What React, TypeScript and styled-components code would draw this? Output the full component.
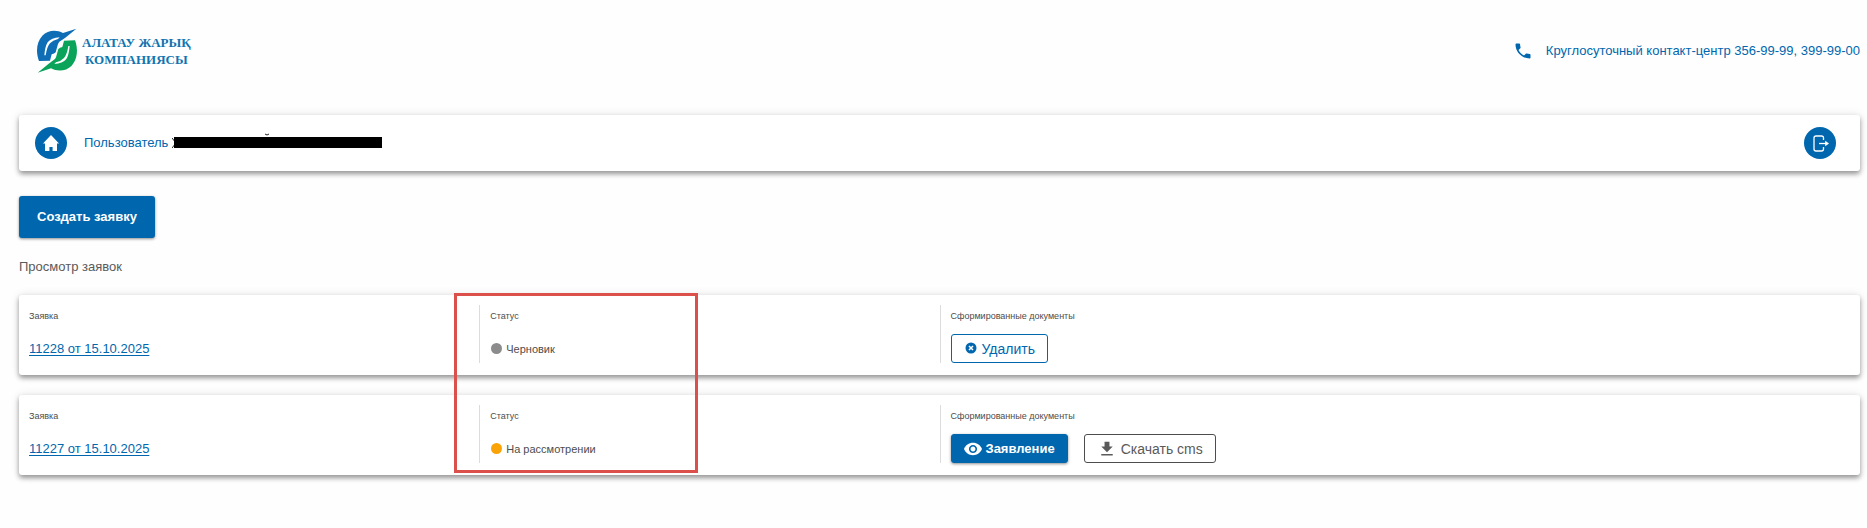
import React from "react";
import styled, { createGlobalStyle, css } from "styled-components";

const blue = "#0067ae";
const grey = "#4d4d4d";
const cardShadow = "0 3px 5px rgba(0, 0, 0, 0.38), 0 0 10px rgba(0, 0, 0, 0.1)";

const GlobalStyle = createGlobalStyle`
  * { box-sizing: border-box; }
  body {
    margin: 0;
    background: #fefefe;
    color: ${grey};
    font: 13px/20px "Liberation Sans", Arial, sans-serif;
  }
`;

const Page = styled.div`
  padding: 0 7px 52px 19px;
`;

const Header = styled.header`
  display: flex;
  align-items: center;
  justify-content: space-between;
  height: 101px;
  margin-bottom: 14px;
  padding-left: 17px;
`;

const Logo = styled.a`
  display: flex;
  align-items: center;
  gap: 3px;
  color: #1174b0;
  text-decoration: none;
`;

const LogoName = styled.span`
  font: bold 13px/17px "Liberation Serif", "Times New Roman", serif;
  text-align: center;
`;

const Contact = styled.div`
  display: flex;
  align-items: center;
  gap: 13px;
  color: ${blue};
`;

const Card = styled.section`
  background: #fff;
  border-radius: 3px;
  box-shadow: ${cardShadow};
`;

const UserBar = styled(Card)`
  display: flex;
  align-items: center;
  height: 56px;
  padding: 0 24px 0 16px;
`;

const RoundButton = styled.button`
  display: flex;
  align-items: center;
  justify-content: center;
  width: 32px;
  height: 32px;
  padding: 0;
  border: 0;
  border-radius: 50%;
  background: ${blue};
  color: #fff;
`;

const User = styled.div`
  display: flex;
  flex: 1;
  align-items: center;
  gap: 4px;
  margin-left: 17px;
  color: ${blue};
`;

const CreateButton = styled.button`
  display: block;
  height: 42px;
  margin-top: 25px;
  padding: 0 18px;
  border: 0;
  border-radius: 3px;
  background: ${blue};
  box-shadow: 0 1px 3px rgba(0, 0, 0, 0.45);
  color: #fff;
  font: bold 13px/20px "Liberation Sans", Arial, sans-serif;
`;

const Title = styled.h1`
  margin: 19px 0 18px;
  color: #5a5a5a;
  font-size: 13px;
  font-weight: normal;
  line-height: 20px;
`;

const List = styled.main`
  position: relative;
  display: grid;
  gap: 20px;
`;

const Request = styled(Card)`
  display: grid;
  grid-template-columns: 1fr 1fr 2fr;
  height: 80px;
  padding: 10px 0 12px;
`;

const Cell = styled.div<{ $divided?: boolean }>`
  display: flex;
  flex-direction: column;
  justify-content: space-between;
  padding: 5px 10px 0;
  border-left: ${(p) => (p.$divided ? "1px solid #dcdcdc" : "0")};
`;

const Label = styled.span`
  font-size: 9px;
  line-height: 12px;
`;

const Value = styled.div`
  display: flex;
  align-items: center;
  gap: 16px;
  height: 29px;
`;

const RequestLink = styled.a`
  color: ${blue};
  text-underline-offset: 2px;
`;

const Status = styled.span`
  display: flex;
  align-items: center;
  gap: 4px;
  padding-left: 1px;
  font-size: 11px;
`;

const Dot = styled.i<{ $color: string }>`
  width: 11px;
  height: 11px;
  border-radius: 50%;
  background: ${(p) => p.$color};
`;

const DocButton = styled.button<{ $kind: "blue" | "grey" | "filled" }>`
  display: flex;
  align-items: center;
  gap: 4px;
  height: 29px;
  padding: 0 12px;
  border: 1px solid ${(p) => (p.$kind === "grey" ? grey : blue)};
  border-radius: 3px;
  background: #fff;
  color: ${(p) => (p.$kind === "grey" ? "#5a5a5a" : blue)};
  font: 14px/20px "Liberation Sans", Arial, sans-serif;
  ${(p) =>
    p.$kind === "filled" &&
    css`
      background: ${blue};
      box-shadow: 0 1px 3px rgba(0, 0, 0, 0.45);
      color: #fff;
      font-size: 13px;
      font-weight: bold;
    `}
`;

const Highlight = styled.div`
  position: absolute;
  top: -2px;
  bottom: 2px;
  left: calc(25% - 25px);
  width: 244px;
  border: 3px solid #dc504c;
  pointer-events: none;
`;

const hook =
  "M27 123C17 97 19 66 37 47C53 31 78 28 99 39L139 26L106 53L96 60Q86 65 84 72L77 97Q73 102 65 103L60 122ZM47 106Q51 80 60 70Q68 61 84 57L89 52Q64 53 53 67Q45 80 43 106Z";

const LogoMark = () => (
  <svg width="43" height="45" viewBox="18 24 129 135" aria-hidden="true" fillRule="evenodd">
    <path fill="#0f6db5" d={hook} />
    <path fill="#0aa35a" d={hook} transform="rotate(180 81 92)" />
  </svg>
);

const PhoneIcon = () => (
  <svg width="20" height="20" viewBox="0 0 24 24" fill="currentColor" aria-hidden="true">
    <path d="M6.62 10.79c1.44 2.83 3.76 5.14 6.59 6.59l2.2-2.2c.27-.27.67-.36 1.02-.24 1.12.37 2.33.57 3.57.57.55 0 1 .45 1 1V20c0 .55-.45 1-1 1-9.39 0-17-7.61-17-17 0-.55.45-1 1-1h3.5c.55 0 1 .45 1 1 0 1.25.2 2.45.57 3.57.11.35.03.74-.25 1.02l-2.2 2.2z" />
  </svg>
);

const HomeIcon = () => (
  <svg width="16" height="16" viewBox="0 0 16 16" fill="currentColor" aria-hidden="true">
    <path d="M8 0L16 8.6H14V16H9.6V12H6.4V16H2V8.6H0Z" />
  </svg>
);

const ExitIcon = () => (
  <svg width="17" height="17" viewBox="0 0 17 17" fill="none" stroke="currentColor" strokeWidth="1.3" aria-hidden="true">
    <path d="M11.5 5V3Q11.5 1 9.5 1H4Q2 1 2 3V14Q2 16 4 16H9.5Q11.5 16 11.5 14V12" />
    <path d="M7 8.5H15" />
    <path d="M13.2 5.8L17 8.5L13.2 11.2Z" fill="currentColor" stroke="none" />
  </svg>
);

const RemoveIcon = () => (
  <svg width="14" height="14" viewBox="0 0 14 14" aria-hidden="true">
    <circle cx="7" cy="6" r="5.5" fill="currentColor" />
    <path d="M5 4L9 8M9 4L5 8" stroke="#fff" strokeWidth="1.5" />
  </svg>
);

const EyeIcon = () => (
  <svg width="18" height="14" viewBox="1 4.5 22 15" fill="currentColor" aria-hidden="true">
    <path d="M12 4.5C7 4.5 2.73 7.61 1 12c1.73 4.39 6 7.5 11 7.5s9.27-3.11 11-7.5c-1.73-4.39-6-7.5-11-7.5zM12 17c-2.76 0-5-2.24-5-5s2.24-5 5-5 5 2.24 5 5-2.24 5-5 5zm0-8c-1.66 0-3 1.34-3 3s1.34 3 3 3 3-1.34 3-3-1.34-3-3-3z" />
  </svg>
);

const DownloadIcon = () => (
  <svg width="20" height="18" viewBox="1 1 22 22" fill="currentColor" aria-hidden="true">
    <path d="M19 9h-4V3H9v6H5l7 7 7-7zM5 18v2h14v-2H5z" />
  </svg>
);

const HiddenName = () => (
  <svg width="212" height="20" viewBox="0 0 212 20" role="img" aria-label="Имя скрыто">
    <path d="M0 5L4 10L0 15" fill="none" stroke="#222" />
    <path d="M93 1Q95 3 97 1" fill="none" stroke="#222" />
    <path d="M2 4H210V15H2Z" fill="#000" />
  </svg>
);

type Doc = { text: string; kind: "blue" | "grey" | "filled"; icon: React.ReactNode };

const requests: { id: string; status: string; color: string; docs: Doc[] }[] = [
  {
    id: "11228 от 15.10.2025",
    status: "Черновик",
    color: "#8c8c8c",
    docs: [{ text: "Удалить", kind: "blue", icon: <RemoveIcon /> }],
  },
  {
    id: "11227 от 15.10.2025",
    status: "На рассмотрении",
    color: "#faa307",
    docs: [
      { text: "Заявление", kind: "filled", icon: <EyeIcon /> },
      { text: "Скачать cms", kind: "grey", icon: <DownloadIcon /> },
    ],
  },
];

export default function App() {
  return (
    <>
      <GlobalStyle />
      <Page>
        <Header>
          <Logo href="#">
            <LogoMark />
            <LogoName>
              АЛАТАУ ЖАРЫҚ
              <br />
              КОМПАНИЯСЫ
            </LogoName>
          </Logo>
          <Contact>
            <PhoneIcon />
            <span>Круглосуточный контакт-центр 356-99-99, 399-99-00</span>
          </Contact>
        </Header>
        <UserBar>
          <RoundButton aria-label="Главная">
            <HomeIcon />
          </RoundButton>
          <User>
            <span>Пользователь</span>
            <HiddenName />
          </User>
          <RoundButton aria-label="Выход">
            <ExitIcon />
          </RoundButton>
        </UserBar>
        <CreateButton>Создать заявку</CreateButton>
        <Title>Просмотр заявок</Title>
        <List>
          {requests.map((r) => (
            <Request key={r.id}>
              <Cell>
                <Label>Заявка</Label>
                <Value>
                  <RequestLink href="#">{r.id}</RequestLink>
                </Value>
              </Cell>
              <Cell $divided>
                <Label>Статус</Label>
                <Value>
                  <Status>
                    <Dot $color={r.color} />
                    {r.status}
                  </Status>
                </Value>
              </Cell>
              <Cell $divided>
                <Label>Сформированные документы</Label>
                <Value>
                  {r.docs.map((d) => (
                    <DocButton key={d.text} $kind={d.kind}>
                      {d.icon}
                      {d.text}
                    </DocButton>
                  ))}
                </Value>
              </Cell>
            </Request>
          ))}
          <Highlight />
        </List>
      </Page>
    </>
  );
}
